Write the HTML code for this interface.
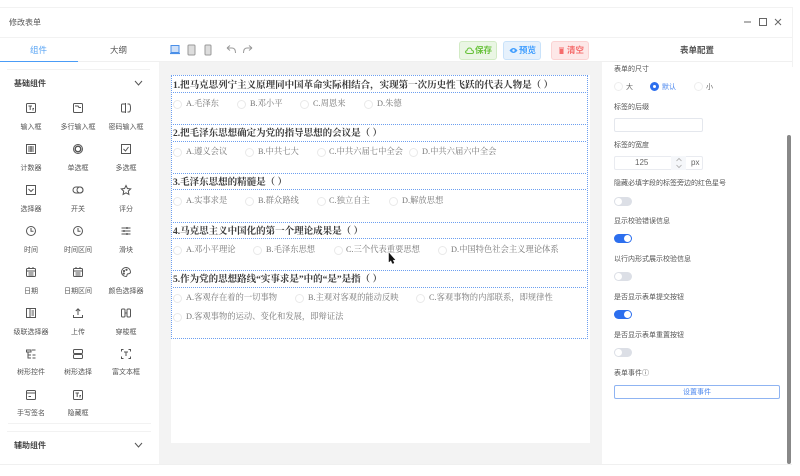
<!DOCTYPE html>
<html lang="zh"><head><meta charset="utf-8"><style>
*{box-sizing:border-box}
html,body{margin:0;padding:0;width:800px;height:476px;overflow:hidden;background:#fff}
body{position:relative;font-family:"Liberation Sans","Noto Sans CJK SC",sans-serif;color:#555}
.a{position:absolute}
.t{position:absolute;white-space:nowrap;line-height:12px}
.l{position:absolute;white-space:nowrap;font-size:7px;line-height:10px;color:#555;width:48px;text-align:center;margin-top:1px}
.ic{position:absolute;width:12px;height:12px;fill:none;stroke:#555;stroke-width:1}
.q{position:absolute;left:173px;white-space:nowrap;font:700 9.5px/14px "Liberation Serif","Noto Serif CJK SC",serif;color:#3a3a3a;margin-top:1px}
.o{position:absolute;white-space:nowrap;font:400 8.3px/12px "Liberation Serif","Noto Serif CJK SC",serif;color:#777;margin-top:1px}
.r{position:absolute;width:9px;height:9px;border:1px solid #e9e9e9;border-radius:50%;background:#fff;margin-top:1px}
.d{position:absolute;left:171px;width:417px;height:1px;background:repeating-linear-gradient(90deg,#6c9ff0 0 1px,#fff 1px 2px)}
.v{position:absolute;top:76px;height:263px;width:1px;background:repeating-linear-gradient(180deg,#6c9ff0 0 1px,#fff 1px 2px)}
.c{position:absolute;left:614px;white-space:nowrap;font-size:7px;line-height:10px;color:#555;margin-top:1px}
.sw{position:absolute;left:614px;width:18px;height:9px;border-radius:5px;background:#dcdfe6}
.sw:after{content:"";position:absolute;left:1px;top:1px;width:7px;height:7px;border-radius:50%;background:#fff}
.sw.on{background:#2d6fee}.sw.on:after{left:10px}
.b{position:absolute;top:41px;width:38px;height:19px;border-radius:3px;border:1px solid;font-size:8.5px;font-weight:700;line-height:17px;white-space:nowrap;padding-left:15px}
.b svg{position:absolute;left:5px;top:4px}
</style></head><body>
<div class="a" style="left:0;top:7px;width:792px;height:1px;background:#f2f2f2"></div>
<div class="a" style="left:0;top:37px;width:792px;height:1px;background:#f2f2f2"></div>
<div class="a" style="left:0;top:61px;width:792px;height:1px;background:#f0f0f0"></div>
<div class="a" style="left:792px;top:7px;width:1px;height:60px;background:#f2f2f2"></div>
<div class="t" style="left:9px;top:17px;font-size:8px;color:#555">修改表单</div>
<svg class="a" style="left:742px;top:16px" width="42" height="12" fill="none" stroke="#666" stroke-width="1"><path d="M2 6H9"/><rect x="17.500" y="2.500" width="7" height="7"/><path d="M33 3l6 6M39 3l-6 6"/></svg>
<div class="t" style="left:30px;top:44px;font-size:8.500px;color:#5aa5f5">组件</div>
<div class="t" style="left:110px;top:44px;font-size:8.500px;color:#555">大纲</div>
<div class="a" style="left:0;top:61px;width:78px;height:1px;background:#4a9cf6"></div>
<div class="a" style="left:7px;top:69px;width:143px;height:1px;background:#f2f2f2"></div>
<div class="t" style="left:14px;top:78px;font-size:8px;font-weight:700;color:#444">基础组件</div>
<svg class="a" style="left:133px;top:78px" width="11" height="10" fill="none" stroke="#555"><path d="M2 3l3.500 4 3.500-4"/></svg>

<svg class="ic" style="left:25px;top:102px"><rect x="1.500" y="1.500" width="9" height="9" rx="1"/><path d="M3.500 4H7M5.200 4V8M7.500 6.500H9M8 6.500V8.500"/></svg>
<svg class="ic" style="left:72px;top:102px"><rect x="1.500" y="1.500" width="9" height="9" rx="1"/><path d="M3 4H6L7 5.500H9"/></svg>
<svg class="ic" style="left:120px;top:102px"><path d="M5 2H2.500Q1.500 2 1.500 3V9Q1.500 10 2.500 10H5M7.500 2H9Q10.500 2 10.500 6T9 10H7.500M5.500 1V11"/></svg>
<div class="l" style="left:7px;top:122px">输入框</div><div class="l" style="left:54px;top:122px">多行输入框</div><div class="l" style="left:102px;top:122px">密码输入框</div>

<svg class="ic" style="left:25px;top:143px"><rect x="1.500" y="1.500" width="9" height="9"/><path d="M3 4H9M3 6H9M3 8H9M6 3V9"/></svg>
<svg class="ic" style="left:72px;top:143px"><circle cx="6" cy="6" r="4.500"/><circle cx="6" cy="6" r="2.800" stroke-width="1.500"/></svg>
<svg class="ic" style="left:120px;top:143px"><rect x="1.500" y="1.500" width="9" height="9"/><path d="M3.500 6L5.500 8 8.500 4"/></svg>
<div class="l" style="left:7px;top:163px">计数器</div><div class="l" style="left:54px;top:163px">单选框</div><div class="l" style="left:102px;top:163px">多选框</div>

<svg class="ic" style="left:25px;top:184px"><rect x="1.500" y="1.500" width="9" height="9"/><path d="M3.500 5L6 7.500 8.500 5"/></svg>
<svg class="ic" style="left:72px;top:184px"><rect x="1" y="3" width="10" height="6" rx="3"/><circle cx="8" cy="6" r="3"/></svg>
<svg class="ic" style="left:120px;top:184px"><path d="M6 1.500L7.400 4.500 10.700 4.900 8.300 7.100 8.900 10.400 6 8.800 3.100 10.400 3.700 7.100 1.300 4.900 4.600 4.500Z"/></svg>
<div class="l" style="left:7px;top:204px">选择器</div><div class="l" style="left:54px;top:204px">开关</div><div class="l" style="left:102px;top:204px">评分</div>

<svg class="ic" style="left:25px;top:225px"><circle cx="6" cy="6" r="4.500"/><path d="M6 3V6.300H8.500"/></svg>
<svg class="ic" style="left:72px;top:225px"><circle cx="6" cy="6" r="4.500"/><path d="M6 3V6.300H8.500"/></svg>
<svg class="ic" style="left:120px;top:225px"><path d="M1.500 3H10.500M1.500 6H10.500M1.500 9H10.500"/><path d="M7 2V4M4 5V7M7 8V10" stroke-width="1.200"/></svg>
<div class="l" style="left:7px;top:245px">时间</div><div class="l" style="left:54px;top:245px">时间区间</div><div class="l" style="left:102px;top:245px">滑块</div>

<svg class="ic" style="left:25px;top:266px"><rect x="1.500" y="2.500" width="9" height="8" rx="1"/><path d="M1.500 5H10.500M4 1V3M8 1V3M3.500 7H8.500M3.500 9H8.500"/></svg>
<svg class="ic" style="left:72px;top:266px"><rect x="1.500" y="2.500" width="9" height="8" rx="1"/><path d="M1.500 5H10.500M4 1V3M8 1V3M3.500 7H8.500M3.500 9H8.500"/></svg>
<svg class="ic" style="left:120px;top:266px"><path d="M6 1.500A4.500 4.500 0 1 0 6 10.500C7.500 10.500 6.500 8.500 7.500 8 8.500 7.500 10.500 8 10.500 6A4.500 4.500 0 0 0 6 1.500Z"/><circle cx="4" cy="5" r=".6"/><circle cx="6.500" cy="3.800" r=".6"/><circle cx="3.800" cy="7.500" r=".6"/></svg>
<div class="l" style="left:7px;top:286px">日期</div><div class="l" style="left:54px;top:286px">日期区间</div><div class="l" style="left:102px;top:286px">颜色选择器</div>

<svg class="ic" style="left:25px;top:307px"><rect x="1.500" y="1.500" width="9" height="9"/><path d="M5 1.500V10.500M6.500 4H9M6.500 6H9M6.500 8H9"/></svg>
<svg class="ic" style="left:72px;top:307px"><path d="M1.500 8V10.500H10.500V8M6 8V2M3.800 4L6 1.800 8.200 4"/></svg>
<svg class="ic" style="left:120px;top:307px"><rect x="1.500" y="2" width="3.500" height="8" rx="1"/><rect x="7" y="2" width="3.500" height="8" rx="1"/><path d="M5 6H7"/></svg>
<div class="l" style="left:7px;top:327px">级联选择器</div><div class="l" style="left:54px;top:327px">上传</div><div class="l" style="left:102px;top:327px">穿梭框</div>

<svg class="ic" style="left:25px;top:348px"><path d="M1.500 2H6V4H1.500ZM3 4V10H6M3 7H6M7 2H10.500M7.500 7H10.500M7.500 10H10.500"/></svg>
<svg class="ic" style="left:72px;top:348px"><rect x="1.500" y="1.500" width="9" height="4" rx="1"/><rect x="1.500" y="6.500" width="9" height="4" rx="1"/></svg>
<svg class="ic" style="left:120px;top:348px"><path d="M1.500 3.500V1.500H3.500M8.500 1.500H10.500V3.500M1.500 8.500V10.500H3.500M8.500 10.500H10.500V8.500M4 4L8 4M6 4V8"/></svg>
<div class="l" style="left:7px;top:367px">树形控件</div><div class="l" style="left:54px;top:367px">树形选择</div><div class="l" style="left:102px;top:367px">富文本框</div>

<svg class="ic" style="left:25px;top:389px"><rect x="1.500" y="1.500" width="9" height="9" rx="1"/><path d="M1.500 4H10.500M3.500 7.500H6"/></svg>
<svg class="ic" style="left:72px;top:389px"><rect x="1.500" y="1.500" width="9" height="9" rx="1"/><path d="M3.500 4H7M5.200 4V8M7.500 6.500H9M8 6.500V8.500"/></svg>
<div class="l" style="left:7px;top:408px">手写签名</div><div class="l" style="left:54px;top:408px">隐藏框</div>

<div class="a" style="left:8px;top:423px;width:143px;height:1px;background:#f2f2f2"></div>
<div class="a" style="left:7px;top:431px;width:144px;height:1px;background:#f2f2f2"></div>
<div class="t" style="left:14px;top:440px;font-size:8px;font-weight:700;color:#444">辅助组件</div>
<svg class="a" style="left:133px;top:440px" width="11" height="10" fill="none" stroke="#555"><path d="M2 3l3.500 4 3.500-4"/></svg>

<!-- centre -->
<div class="a" style="left:159px;top:62px;width:443px;height:403px;background:#f3f3f3"></div>
<div class="a" style="left:171px;top:75px;width:419px;height:368px;background:#fff"></div>
<div class="a" style="left:0;top:464px;width:792px;height:1px;background:#f0f0f0"></div>

<svg class="a" style="left:168px;top:43px" width="90" height="14" fill="none"><rect x="3" y="2.500" width="8" height="7" fill="#cfe0f8" stroke="#4a8fe8"/><path d="M2 10.500H12" stroke="#4a8fe8" stroke-width="1.200"/><rect x="20" y="2" width="7" height="10" rx="1" fill="#ddd" stroke="#999"/><rect x="37" y="2" width="6" height="10" rx="1" fill="#ddd" stroke="#999"/><path d="M59 5L62 2.500M59 5L62 7.500M59 5H64Q67.500 5 67.500 10" stroke="#999"/><path d="M84 5L81 2.500M84 5L81 7.500M84 5H79Q75.500 5 75.500 10" stroke="#999"/></svg>
<div class="b" style="left:459px;background:#eaf6e4;border-color:#d2ebc5;color:#67c23a"><svg width="9" height="9" fill="none" stroke="#67c23a"><path d="M2.500 7.500H7Q8.500 7.500 8.500 6T7 4.500Q6.500 2 4.500 2T2 4.500Q.5 5 .5 6T2.500 7.500Z"/></svg>保存</div>
<div class="b" style="left:503px;background:#e6f1fc;border-color:#c9e2fa;color:#409eff"><svg width="9" height="9"><path d="M.5 4.500Q4.500-.5 8.500 4.500 4.500 9.500 .5 4.500Z" fill="#409eff"/><circle cx="4.500" cy="4.500" r="1.200" fill="#e6f1fc"/></svg>预览</div>
<div class="b" style="left:551px;background:#fde8e8;border-color:#fbd3d3;color:#f56c6c"><svg width="9" height="9"><path d="M2 1.500H7V2.500H2ZM2.500 3H6.500V8H2.500Z" fill="#f56c6c"/></svg>清空</div>

<div class="d" style="top:75px"></div><div class="d" style="top:92px"></div><div class="d" style="top:124px"></div><div class="d" style="top:141px"></div><div class="d" style="top:173px"></div><div class="d" style="top:189px"></div><div class="d" style="top:222px"></div><div class="d" style="top:238px"></div><div class="d" style="top:270px"></div><div class="d" style="top:287px"></div><div class="d" style="top:338px"></div>
<div class="v" style="left:171px"></div><div class="v" style="left:587px"></div>

<div class="q" style="top:78px">1.把马克思列宁主义原理同中国革命实际相结合，实现第一次历史性飞跃的代表人物是（ ）</div>
<div class="q" style="top:126px">2.把毛泽东思想确定为党的指导思想的会议是（ ）</div>
<div class="q" style="top:175px">3.毛泽东思想的精髓是（ ）</div>
<div class="q" style="top:224px">4.马克思主义中国化的第一个理论成果是（ ）</div>
<div class="q" style="top:272px">5.作为党的思想路线“实事求是”中的“是”是指（ ）</div>

<i class="r" style="left:173px;top:99px"></i><div class="o" style="left:186px;top:97px">A.毛泽东</div>
<i class="r" style="left:237px;top:99px"></i><div class="o" style="left:250px;top:97px">B.邓小平</div>
<i class="r" style="left:300px;top:99px"></i><div class="o" style="left:313px;top:97px">C.周恩来</div>
<i class="r" style="left:364px;top:99px"></i><div class="o" style="left:377px;top:97px">D.朱德</div>

<i class="r" style="left:173px;top:147px"></i><div class="o" style="left:186px;top:145px">A.遵义会议</div>
<i class="r" style="left:245px;top:147px"></i><div class="o" style="left:258px;top:145px">B.中共七大</div>
<i class="r" style="left:317px;top:147px"></i><div class="o" style="left:329px;top:145px">C.中共六届七中全会</div>
<i class="r" style="left:409px;top:147px"></i><div class="o" style="left:422px;top:145px">D.中共六届六中全会</div>

<i class="r" style="left:173px;top:196px"></i><div class="o" style="left:186px;top:194px">A.实事求是</div>
<i class="r" style="left:245px;top:196px"></i><div class="o" style="left:258px;top:194px">B.群众路线</div>
<i class="r" style="left:317px;top:196px"></i><div class="o" style="left:329px;top:194px">C.独立自主</div>
<i class="r" style="left:389px;top:196px"></i><div class="o" style="left:402px;top:194px">D.解放思想</div>

<i class="r" style="left:173px;top:245px"></i><div class="o" style="left:186px;top:243px">A.邓小平理论</div>
<i class="r" style="left:253px;top:245px"></i><div class="o" style="left:266px;top:243px">B.毛泽东思想</div>
<i class="r" style="left:334px;top:245px"></i><div class="o" style="left:346px;top:243px">C.三个代表重要思想</div>
<i class="r" style="left:438px;top:245px"></i><div class="o" style="left:451px;top:243px">D.中国特色社会主义理论体系</div>

<i class="r" style="left:173px;top:293px"></i><div class="o" style="left:186px;top:291px">A.客观存在着的一切事物</div>
<i class="r" style="left:295px;top:293px"></i><div class="o" style="left:308px;top:291px">B.主观对客观的能动反映</div>
<i class="r" style="left:416px;top:293px"></i><div class="o" style="left:429px;top:291px">C.客观事物的内部联系，即规律性</div>
<i class="r" style="left:173px;top:312px"></i><div class="o" style="left:186px;top:310px">D.客观事物的运动、变化和发展，即辩证法</div>

<svg class="a" style="left:388px;top:253px" width="8" height="12"><path d="M1 0V9L3 7.200 4.500 10.500 6 10 4.600 6.800H7Z" fill="#111" stroke="#222" stroke-width=".5"/></svg>

<!-- right -->
<div class="t" style="left:680px;top:44px;font-size:8.500px;font-weight:700;color:#555">表单配置</div>
<div class="c" style="top:64px">表单的尺寸</div>
<i class="r" style="left:614px;top:81px;border-color:#eee"></i><div class="c" style="left:626px;top:82px;color:#666">大</div>
<i class="r" style="left:650px;top:81px;border:3px solid #2d6fee"></i><div class="c" style="left:662px;top:82px;color:#4a86ee">默认</div>
<i class="r" style="left:694px;top:81px;border-color:#eee"></i><div class="c" style="left:706px;top:82px;color:#666">小</div>
<div class="c" style="top:102px">标签的后缀</div>
<div class="a" style="left:614px;top:118px;width:89px;height:14px;border:1px solid #e4e7ed;border-radius:2px"></div>
<div class="c" style="top:140px">标签的宽度</div>
<div class="a" style="left:614px;top:156px;width:89px;height:14px;border:1px solid #e9ebf0;border-radius:2px"></div>
<div class="a" style="left:671px;top:156px;width:15px;height:14px;background:#f5f7fa"></div>
<svg class="a" style="left:674px;top:156px" width="10" height="14" fill="none" stroke="#aaa" stroke-width=".8"><path d="M2.500 5L5 2.500 7.500 5M2.500 9L5 11.500 7.500 9"/></svg>
<div class="t" style="left:635px;top:157px;font-size:8px;color:#666">125</div>
<div class="t" style="left:691px;top:157px;font-size:8px;color:#666">px</div>
<div class="c" style="top:178px">隐藏必填字段的标签旁边的红色星号</div>
<div class="sw" style="top:197px"></div>
<div class="c" style="top:216px">显示校验错误信息</div>
<div class="sw on" style="top:234px"></div>
<div class="c" style="top:254px">以行内形式展示校验信息</div>
<div class="sw" style="top:272px"></div>
<div class="c" style="top:292px">是否显示表单提交按钮</div>
<div class="sw on" style="top:310px"></div>
<div class="c" style="top:330px">是否显示表单重置按钮</div>
<div class="sw" style="top:348px"></div>
<div class="c" style="top:368px">表单事件ⓘ</div>
<div class="a" style="left:614px;top:385px;width:166px;height:14px;border:1px solid #8fb4f2;border-radius:2px;font-size:7px;line-height:13px;text-align:center;color:#4a86ee">设置事件</div>
<div class="a" style="left:787px;top:135px;width:4px;height:329px;background:#888;border-radius:2px"></div>
</body></html>
